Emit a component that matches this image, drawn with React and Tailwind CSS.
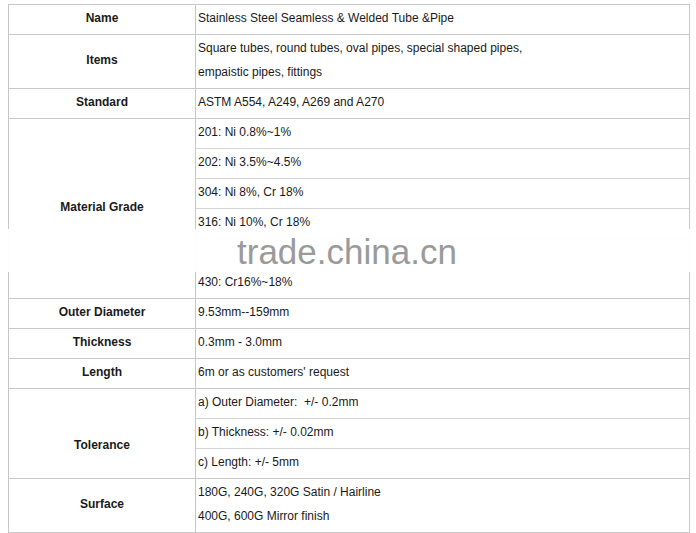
import React from 'react';

const rows = [
    { label: 'Name', lines: [['Stainless Steel Seamless & Welded Tube &Pipe']] },
    { label: 'Items', lines: [['Square tubes, round tubes, oval pipes, special shaped pipes,', 'empaistic pipes, fittings']] },
    { label: 'Standard', lines: [['ASTM A554, A249, A269 and A270']] },
    {
        label: 'Material Grade',
        lines: [
            ['201: Ni 0.8%~1%'],
            ['202: Ni 3.5%~4.5%'],
            ['304: Ni 8%, Cr 18%'],
            ['316: Ni 10%, Cr 18%'],
            [''],
            ['430: Cr16%~18%'],
        ],
    },
    { label: 'Outer Diameter', lines: [['9.53mm--159mm']] },
    { label: 'Thickness', lines: [['0.3mm - 3.0mm']] },
    { label: 'Length', lines: [["6m or as customers' request"]] },
    {
        label: 'Tolerance',
        // label sits a bit low in the original
        labelPad: 'pt-[22px]',
        lines: [
            ['a) Outer Diameter:\u00a0 +/- 0.2mm'],
            ['b) Thickness: +/- 0.02mm'],
            ['c) Length: +/- 5mm'],
        ],
    },
    { label: 'Surface', lines: [['180G, 240G, 320G Satin / Hairline', '400G, 600G Mirror finish']] },
];

export default function App() {
    return (
        <div className="relative w-[696px] h-[533px] bg-white pt-[4px] pl-[8px] text-[12px] text-[#1a1a1a] font-['Liberation_Sans',Arial,sans-serif]">
            <div className="w-[682px] border border-[#c8c8c8]">
                {rows.map((row, i) => (
                    <div key={row.label} className={`flex ${i < rows.length - 1 ? 'border-b border-[#c8c8c8]' : ''}`}>
                        <div className={`w-[187px] shrink-0 border-r border-[#c8c8c8] ${row.labelPad || 'pb-[3px]'} flex items-center justify-center font-bold`}>
                            {row.label}
                        </div>
                        <div className="flex-1 flex flex-col divide-y divide-[#d4d4d4]">
                            {row.lines.map((cell, j) => (
                                <div
                                    key={j}
                                    className={`box-content pl-[2px] pb-[3px] flex flex-col justify-center ${cell.length > 1 ? 'h-[50px] leading-[24px]' : 'h-[26px]'}`}
                                >
                                    {cell.map((t, k) => (
                                        <span key={k}>{t}</span>
                                    ))}
                                </div>
                            ))}
                        </div>
                    </div>
                ))}
            </div>

            {/* watermark band */}
            <div className="absolute left-0 top-[229px] w-[696px] h-[43px] bg-white/95 flex items-center">
                <span className="ml-[237px] mt-[1px] text-[35px] leading-none text-[#9a9a9a] font-['Liberation_Sans',Arial,sans-serif]">
                    trade.china.cn
                </span>
            </div>
        </div>
    );
}
